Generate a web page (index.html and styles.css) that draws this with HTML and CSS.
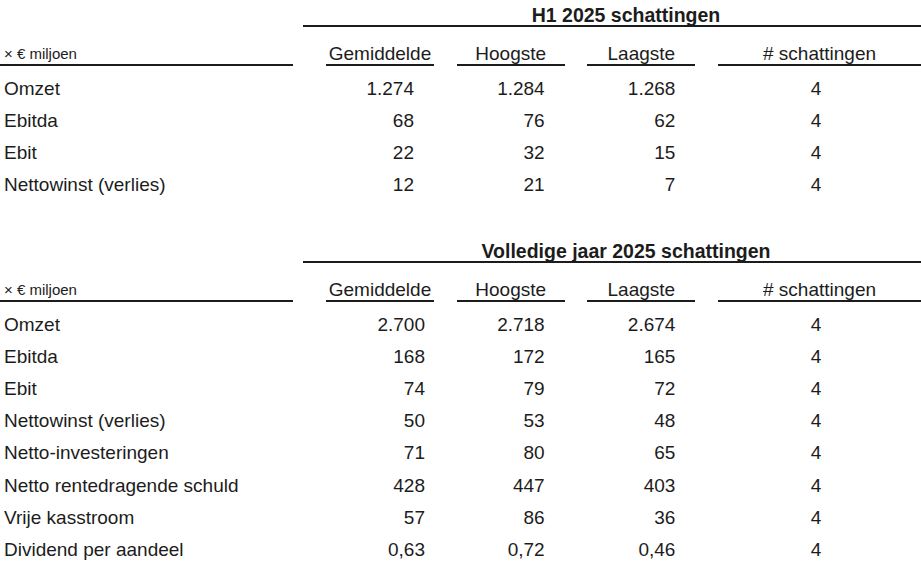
FILE: index.html
```html
<!DOCTYPE html>
<html lang="nl">
<head>
<meta charset="utf-8">
<title>Schattingen 2025</title>
<link rel="stylesheet" href="styles.css">
</head>
<body>
<div class="sheet">
  <section class="est est-h1">
    <div class="group">H1 2025 schattingen</div>
    <div class="row head">
      <div class="cell label">× € miljoen</div>
      <div class="cell">Gemiddelde</div>
      <div class="cell">Hoogste</div>
      <div class="cell">Laagste</div>
      <div class="cell">#&nbsp;schattingen</div>
    </div>
    <div class="body">
      <div class="row"><div class="label">Omzet</div><div class="num">1.274</div><div class="num">1.284</div><div class="num">1.268</div><div class="cnt">4</div></div>
      <div class="row"><div class="label">Ebitda</div><div class="num">68</div><div class="num">76</div><div class="num">62</div><div class="cnt">4</div></div>
      <div class="row"><div class="label">Ebit</div><div class="num">22</div><div class="num">32</div><div class="num">15</div><div class="cnt">4</div></div>
      <div class="row"><div class="label">Nettowinst (verlies)</div><div class="num">12</div><div class="num">21</div><div class="num">7</div><div class="cnt">4</div></div>
    </div>
  </section>

  <section class="est est-fy">
    <div class="group">Volledige jaar 2025 schattingen</div>
    <div class="row head">
      <div class="cell label">× € miljoen</div>
      <div class="cell">Gemiddelde</div>
      <div class="cell">Hoogste</div>
      <div class="cell">Laagste</div>
      <div class="cell">#&nbsp;schattingen</div>
    </div>
    <div class="body">
      <div class="row"><div class="label">Omzet</div><div class="num">2.700</div><div class="num">2.718</div><div class="num">2.674</div><div class="cnt">4</div></div>
      <div class="row"><div class="label">Ebitda</div><div class="num">168</div><div class="num">172</div><div class="num">165</div><div class="cnt">4</div></div>
      <div class="row"><div class="label">Ebit</div><div class="num">74</div><div class="num">79</div><div class="num">72</div><div class="cnt">4</div></div>
      <div class="row"><div class="label">Nettowinst (verlies)</div><div class="num">50</div><div class="num">53</div><div class="num">48</div><div class="cnt">4</div></div>
      <div class="row"><div class="label">Netto-investeringen</div><div class="num">71</div><div class="num">80</div><div class="num">65</div><div class="cnt">4</div></div>
      <div class="row"><div class="label">Netto rentedragende schuld</div><div class="num">428</div><div class="num">447</div><div class="num">403</div><div class="cnt">4</div></div>
      <div class="row"><div class="label">Vrije kasstroom</div><div class="num">57</div><div class="num">86</div><div class="num">36</div><div class="cnt">4</div></div>
      <div class="row"><div class="label">Dividend per aandeel</div><div class="num">0,63</div><div class="num">0,72</div><div class="num">0,46</div><div class="cnt">4</div></div>
    </div>
  </section>
</div>
</body>
</html>
```

FILE: styles.css
```css
* {
  box-sizing: border-box;
}

html, body {
  margin: 0;
  padding: 0;
  background: #ffffff;
}

body {
  font-family: "Liberation Sans", Arial, sans-serif;
  color: #1c1c1c;
  font-size: 19px;
  width: 921px;
  overflow: hidden;
}

.sheet {
  display: flex;
  flex-direction: column;
}

.est-fy {
  margin-top: 34.5px;
}

.group {
  margin-left: 303px;
  height: 27px;
  padding-top: 5px;
  padding-left: 28px;
  line-height: 20px;
  font-size: 19.5px;
  font-weight: bold;
  text-align: center;
  border-bottom: 2px solid #1c1c1c;
  white-space: nowrap;
}

.row {
  display: grid;
  grid-template-columns: 303.3px 108px 108px 108px 1fr;
  column-gap: 22.7px;
}

.head .cell {
  height: 39px;
  padding-top: 17px;
  line-height: 20px;
  text-align: center;
  border-bottom: 2px solid #1c1c1c;
  white-space: nowrap;
}

.head .cell.label {
  margin-right: 10.3px;
  text-align: left;
  padding-left: 4px;
  font-size: 15px;
}

.body {
  padding-top: 6.7px;
}

.body .row {
  height: 32.2px;
  line-height: 32.2px;
  white-space: nowrap;
}

.body .label {
  padding-left: 4px;
}

.body .num {
  text-align: right;
  padding-right: 20px;
}

.est-fy .body .num:nth-child(2) {
  padding-right: 9px;
}

.body .cnt {
  text-align: center;
  padding-right: 7px;
}
```
